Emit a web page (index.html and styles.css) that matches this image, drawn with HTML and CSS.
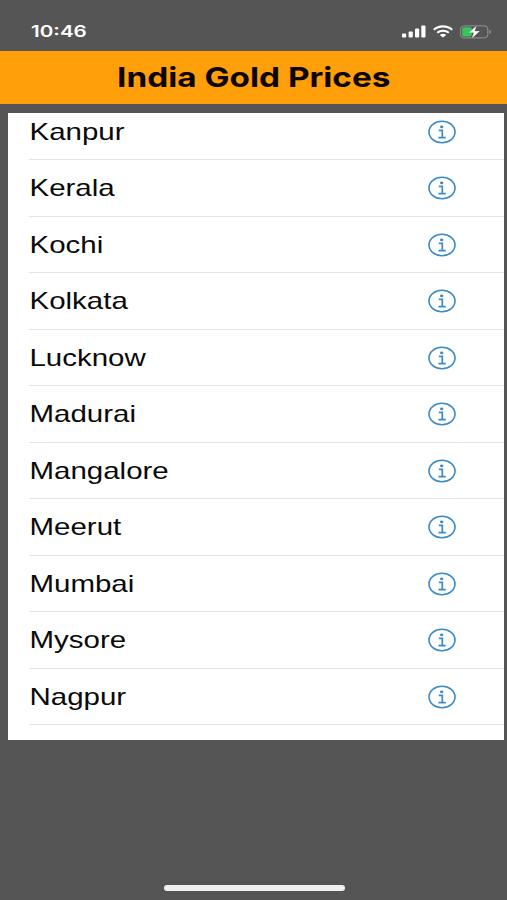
FILE: index.html
```
<!DOCTYPE html>
<html lang="en">
<head>
  <meta charset="UTF-8">
  <title>India Gold Prices</title>
  <link rel="stylesheet" href="styles.css">
</head>
<body>
  <svg class="sprite" width="0" height="0">
    <symbol id="info" viewBox="0 0 28 24">
      <ellipse cx="14" cy="12" rx="13" ry="10.7" fill="none" stroke="currentColor" stroke-width="1.6"/>
      <ellipse cx="13.7" cy="6.9" rx="1.7" ry="1.4" fill="currentColor"/>
      <path d="M10.8 10.4h3.5v7.2M10.4 17.6h7.4" fill="none" stroke="currentColor" stroke-width="1.7"/>
    </symbol>
  </svg>

  <div class="status-bar">
    <span class="time">10:46</span>
    <div class="status-icons">
      <svg class="signal" width="24" height="13" viewBox="0 0 24 13" fill="#fff">
        <rect x="0" y="8.5" width="4.2" height="4" rx="1"/>
        <rect x="6.6" y="6.5" width="4.2" height="6" rx="1"/>
        <rect x="13" y="3.5" width="4.2" height="9" rx="1"/>
        <rect x="19.3" y="0.5" width="4.2" height="12" rx="1"/>
      </svg>
      <svg class="wifi" width="20" height="13" viewBox="0 0 20 13" fill="none" stroke="#fff" stroke-width="2.1">
        <path d="M0.8 4.8C6 0.2 14 0.2 19.2 4.8"/>
        <path d="M4.2 7.8C7.5 5 12.5 5 15.8 7.8"/>
        <path d="M6.8 9.9C8.6 8.4 11.4 8.4 13.2 9.9L10 12.6z" fill="#fff" stroke="none"/>
      </svg>
      <svg class="battery" width="32" height="14" viewBox="0 0 32 14">
        <rect x="0.6" y="0.9" width="27.2" height="12" rx="3.2" fill="none" stroke="#949494" stroke-width="1"/>
        <path d="M29.3 4.8c2.4 .8 2.4 3.4 0 4.2z" fill="#949494"/>
        <rect x="2.2" y="2.3" width="9.6" height="9.2" rx="1.8" fill="#35c759"/>
        <path d="M16.8 0.5L8.5 7.7h5L11.8 13.5L20 6h-5.2z" fill="#fff" stroke="#555" stroke-width="0.3"/>
      </svg>
    </div>
  </div>

  <header class="header">
    <h1>India Gold Prices</h1>
  </header>

  <div class="list">
    <ul class="cities">
      <li class="city"><span class="name">Kanpur</span><svg class="info"><use href="#info"/></svg></li>
      <li class="city"><span class="name">Kerala</span><svg class="info"><use href="#info"/></svg></li>
      <li class="city"><span class="name">Kochi</span><svg class="info"><use href="#info"/></svg></li>
      <li class="city"><span class="name">Kolkata</span><svg class="info"><use href="#info"/></svg></li>
      <li class="city"><span class="name">Lucknow</span><svg class="info"><use href="#info"/></svg></li>
      <li class="city"><span class="name">Madurai</span><svg class="info"><use href="#info"/></svg></li>
      <li class="city"><span class="name">Mangalore</span><svg class="info"><use href="#info"/></svg></li>
      <li class="city"><span class="name">Meerut</span><svg class="info"><use href="#info"/></svg></li>
      <li class="city"><span class="name">Mumbai</span><svg class="info"><use href="#info"/></svg></li>
      <li class="city"><span class="name">Mysore</span><svg class="info"><use href="#info"/></svg></li>
      <li class="city"><span class="name">Nagpur</span><svg class="info"><use href="#info"/></svg></li>
    </ul>
  </div>

  <div class="home-indicator"></div>
</body>
</html>
```
FILE: styles.css
```
* {
  box-sizing: border-box;
}

body {
  margin: 0;
  height: 900px;
  display: flex;
  flex-direction: column;
  overflow: hidden;
  background-color: #555;
  font-family: "Liberation Sans", Arial, sans-serif;
}

.sprite {
  display: none;
}

.status-bar {
  height: 51px;
  padding: 12px 15px 0 31px;
  display: flex;
  justify-content: space-between;
  align-items: center;
  color: #fff;
}

.time {
  font-family: Inter, sans-serif;
  font-size: 15.5px;
  font-weight: 600;
  transform: scaleX(1.33);
  transform-origin: left;
}

.status-icons {
  display: flex;
  align-items: center;
}

.wifi {
  margin: 0 7px 0 7px;
}

.header {
  height: 53px;
  padding-bottom: 2px;
  display: flex;
  justify-content: center;
  align-items: center;
  background-color: #ff9f0a;
}

.header h1 {
  margin: 0;
  font-family: Inter, sans-serif;
  font-size: 27.5px;
  font-weight: 700;
  color: #0d0500;
  white-space: nowrap;
  transform: scaleX(1.212);
}

.list {
  height: 627px;
  margin: 9px 3px 0 8px;
  overflow: hidden;
  background-color: #fff;
}

/* scrolled a little, so the first row is cut at the top */
.cities {
  list-style: none;
  margin: -9.4px 0 0;
  padding: 0 0 0 21px;
}

.city {
  height: 56.5px;
  padding: 1px 48.5px 0 0;
  display: flex;
  justify-content: space-between;
  align-items: center;
  border-bottom: 1px solid #e4e4e4;
}

.name {
  padding-left: 0.4px;
  font-size: 24px;
  color: #0a0a0a;
  transform: scaleX(1.228);
  transform-origin: left;
}

.info {
  width: 28px;
  height: 24px;
  color: #3b8bc9;
}

.home-indicator {
  width: 181px;
  height: 6px;
  margin: auto auto 9px 164px;
  border-radius: 3px;
  background-color: #f0f0f0;
}
```
